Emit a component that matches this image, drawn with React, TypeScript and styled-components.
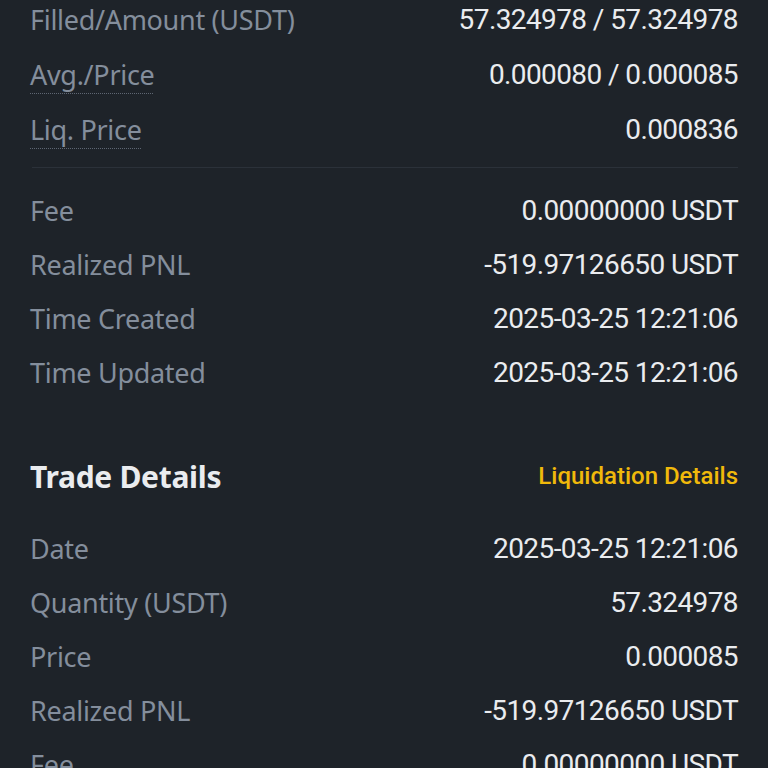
import styled, { createGlobalStyle } from "styled-components";

const GlobalStyle = createGlobalStyle`
  html, body {
    margin: 0;
    padding: 0;
    background: #1e2329;
  }
  body {
    font-family: "Noto Sans", Roboto, sans-serif;
    -webkit-font-smoothing: antialiased;
  }
`

const Page = styled.div`
  width: 768px;
  height: 768px;
  overflow: hidden;
  background: #1e2329;
  padding: 0 30px;
  box-sizing: border-box;
`
const Inner = styled.div`
  margin-top: -8px;
  display: flex;
  flex-direction: column;
`
const Row = styled.div<{ $h?: number }>`
  height: ${(p) => p.$h ?? 54}px;
  display: flex;
  align-items: center;
  justify-content: space-between;
`
const Label = styled.span<{ $dotted?: boolean }>`
  color: #848e9c;
  font-family: "Noto Sans", sans-serif;
  font-size: 27px;
  letter-spacing: -0.3px;
  text-decoration: ${(p) => (p.$dotted ? "underline dotted #5e6673" : "none")};
  text-decoration-thickness: 1px;
  text-underline-offset: 8px;
`
const Value = styled.span`
  color: #eaecef;
  font-family: Roboto, sans-serif;
  font-size: 28px;
  letter-spacing: -0.6px;
`
const Divider = styled.div`
  height: 1px;
  background: #2b3139;
  margin: 10px 0 15px 2px;
`
const Header = styled.div`
  height: 60px;
  margin-top: 47px;
  margin-bottom: 15px;
  display: flex;
  align-items: center;
  justify-content: space-between;
`
const Title = styled.span`
  color: #eaecef;
  font-family: "Noto Sans", sans-serif;
  font-weight: 700;
  font-size: 30px;
  letter-spacing: -0.3px;
`
const Link = styled.span`
  color: #f0b90b;
  font-family: Roboto, sans-serif;
  font-weight: 500;
  font-size: 24px;
`

type Item = { label: string; value: string; dotted?: boolean }

const top: Item[] = [
  { label: "Filled/Amount (USDT)", value: "57.324978 / 57.324978" },
  { label: "Avg./Price", value: "0.000080 / 0.000085", dotted: true },
  { label: "Liq. Price", value: "0.000836", dotted: true },
]
const middle: Item[] = [
  { label: "Fee", value: "0.00000000 USDT" },
  { label: "Realized PNL", value: "-519.97126650 USDT" },
  { label: "Time Created", value: "2025-03-25 12:21:06" },
  { label: "Time Updated", value: "2025-03-25 12:21:06" },
]
const trades: Item[] = [
  { label: "Date", value: "2025-03-25 12:21:06" },
  { label: "Quantity (USDT)", value: "57.324978" },
  { label: "Price", value: "0.000085" },
  { label: "Realized PNL", value: "-519.97126650 USDT" },
  { label: "Fee", value: "0.00000000 USDT" },
]

function App() {
  return (
    <>
      <GlobalStyle />
      <Page>
        <Inner>
          {top.map((it) => (
            <Row key={it.label} $h={55}>
              <Label $dotted={it.dotted}>{it.label}</Label>
              <Value>{it.value}</Value>
            </Row>
          ))}
          <Divider />
          {middle.map((it) => (
            <Row key={it.label}>
              <Label>{it.label}</Label>
              <Value>{it.value}</Value>
            </Row>
          ))}
          <Header>
            <Title>Trade Details</Title>
            <Link>Liquidation Details</Link>
          </Header>
          {trades.map((it) => (
            <Row key={it.label}>
              <Label>{it.label}</Label>
              <Value>{it.value}</Value>
            </Row>
          ))}
        </Inner>
      </Page>
    </>
  );
}

export default App;
